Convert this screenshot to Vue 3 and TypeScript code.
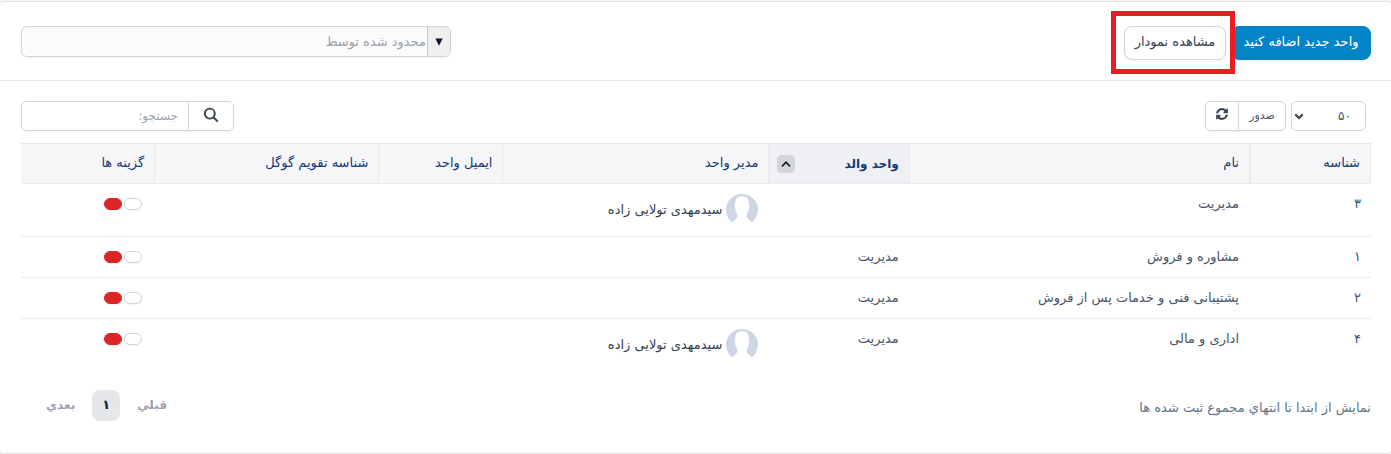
<script setup lang="ts">
import { ref } from 'vue'

interface Department {
  id: string
  name: string
  parent: string
  manager: string
}

const departments: Department[] = [
  { id: '۳', name: 'مدیریت', parent: '', manager: 'سیدمهدی تولایی زاده' },
  { id: '۱', name: 'مشاوره و فروش', parent: 'مدیریت', manager: '' },
  { id: '۲', name: 'پشتیبانی فنی و خدمات پس از فروش', parent: 'مدیریت', manager: '' },
  { id: '۴', name: 'اداری و مالی', parent: 'مدیریت', manager: 'سیدمهدی تولایی زاده' },
]

const pageSize = ref('50')
const limitedBy = ref('')
const search = ref('')
</script>

<template>
  <main class="panel" dir="rtl" lang="fa">
    <header class="panel-head">
      <div class="actions">
        <button type="button" class="btn primary">واحد جدید اضافه کنید</button>
        <div class="highlighted">
          <button type="button" class="btn outline">مشاهده نمودار</button>
          <span class="highlight"></span>
        </div>
      </div>
      <div class="limit">
        <span class="limit-arrow">
          <svg width="8" height="8" viewBox="0 0 8 8"><path d="M0.3 0.5H7.7L4 7.8Z" fill="#0f172a" /></svg>
        </span>
        <select v-model="limitedBy" class="limit-select" aria-label="محدود شده توسط">
          <option value="">محدود شده توسط</option>
        </select>
      </div>
    </header>

    <section class="panel-body">
      <div class="toolbar">
        <div class="tools">
          <div class="size">
            <select v-model="pageSize" class="size-select" aria-label="۵۰">
              <option value="50">۵۰</option>
            </select>
            <svg class="size-arrow" width="10" height="7" viewBox="0 0 10 7">
              <path d="M1.3 1.4L5 5L8.7 1.4" fill="none" stroke="#3f4650" stroke-width="2.2" />
            </svg>
          </div>
          <div class="group">
            <button type="button" class="export">صدور</button>
            <button type="button" class="refresh" aria-label="↻">
              <svg width="12" height="12" viewBox="0 0 512 512" fill="#374151" stroke="#374151" stroke-width="14">
                <path d="M370.7 133.3C339.5 104 298.9 88 255.8 88c-77.5.1-144.3 53.2-162.8 126.9-1.3 5.4-6.1 9.2-11.7 9.2H24.1c-7.5 0-13.2-6.8-11.8-14.2C33.9 94.9 134.8 8 256 8c66.4 0 126.8 26.1 171.300 68.7L463 41C478.1 25.9 504 36.6 504 57.9V192c0 13.3-10.7 24-24 24H345.9c-21.4 0-32.1-25.9-17-41zM32 296h134.1c21.4 0 32.1 25.9 17 41l-41.8 41.7c31.3 29.3 71.8 45.3 114.9 45.3 77.4-.1 144.3-53.1 162.8-126.8 1.3-5.4 6.1-9.2 11.7-9.2h57.3c7.5 0 13.2 6.8 11.8 14.2C478.1 417.1 377.2 504 256 504c-66.4 0-126.8-26.1-171.3-68.7L49 471c-15.1 15.1-41 4.4-41-16.900V320c0-13.3 10.7-24 24-24z" />
              </svg>
            </button>
          </div>
        </div>
        <div class="search">
          <button type="button" class="search-btn" aria-label="جستجو">
            <svg width="16" height="16" viewBox="0 0 16 16" fill="none" stroke="#374151">
              <circle cx="6.8" cy="6.6" r="5" stroke-width="1.9" />
              <path d="M10.4 10.3L14.8 14.6" stroke-width="2" />
            </svg>
          </button>
          <input v-model="search" type="search" class="search-input" placeholder="جستجو:" aria-label="جستجو:" />
        </div>
      </div>

      <table class="grid">
        <thead>
          <tr>
            <th class="c-id" scope="col">شناسه</th>
            <th class="c-name" scope="col">نام</th>
            <th class="c-parent sorted" scope="col" aria-sort="ascending">
              <div class="sort">
                <span>واحد والد</span>
                <span class="sort-mark">
                  <svg width="10" height="8" viewBox="0 0 10 8">
                    <path d="M1 6.3L5 2.2L9 6.3" fill="none" stroke="#111827" stroke-width="1.7" />
                  </svg>
                </span>
              </div>
            </th>
            <th class="c-manager" scope="col">مدیر واحد</th>
            <th class="c-email" scope="col">ایمیل واحد</th>
            <th class="c-google" scope="col">شناسه تقویم گوگل</th>
            <th class="c-options" scope="col">گزینه ها</th>
          </tr>
        </thead>
        <tbody>
          <tr v-for="d in departments" :key="d.id">
            <td>{{ d.id }}</td>
            <td>{{ d.name }}</td>
            <td>{{ d.parent }}</td>
            <td>
              <div v-if="d.manager" class="person">
                <svg class="avatar" width="32" height="32" viewBox="0 0 32 32">
                  <path d="M6.2 28.6A16 16 0 1 1 25.8 28.6C24.6 26 21.400 25.600 20.800 22.800C20.500 21.800 20.600 20.600 21.200 19.300C22.200 18 22.700 16.300 22.800 14.400C23.700 12.800 23.400 11 22.800 10C23 5 20.300 2.300 16 2.300C11.700 2.300 9 5 9.200 10C8.600 11 8.300 12.800 9.200 14.400C9.300 16.300 9.800 18 10.800 19.300C11.400 20.600 11.500 21.800 11.200 22.800C10.600 25.600 7.400 26 6.200 28.600Z" fill="#ced5e5" />
                </svg>
                <a href="#">{{ d.manager }}</a>
              </div>
            </td>
            <td></td>
            <td></td>
            <td>
              <div class="options">
                <button type="button" class="pill" aria-label="ویرایش"></button>
                <button type="button" class="pill danger" aria-label="حذف"></button>
              </div>
            </td>
          </tr>
        </tbody>
      </table>

      <footer class="foot">
        <p class="summary">نمایش از ابتدا تا انتهاي مجموع ثبت شده ها</p>
        <nav class="pages">
          <a href="#" class="page">قبلي</a>
          <a href="#" class="page current" aria-current="page">۱</a>
          <a href="#" class="page">بعدي</a>
        </nav>
      </footer>
    </section>
  </main>
</template>

<style>
body {
  margin: 0;
  background: #f4f4f5;
}
</style>

<style scoped>
* {
  box-sizing: border-box;
}

.panel {
  margin-top: 1px;
  background: #fff;
  border-top: 1px solid #e2e3e7;
  border-bottom: 1px solid #e2e3e7;
  border-radius: 4px;
  font: 13px/20px "DejaVu Sans", sans-serif;
  color: #475569;
}

button,
select,
input {
  margin: 0;
  font: inherit;
  color: inherit;
  appearance: none;
}

.panel-head {
  display: flex;
  justify-content: space-between;
  align-items: flex-start;
  padding: 24px 20px 20px;
  border-bottom: 1px solid #e5e7eb;
}

.actions {
  display: flex;
  gap: 5px;
}

.btn {
  height: 34px;
  padding: 0 9px 2px;
  border: 1px solid #d1d5db;
  border-radius: 8px;
  background: #fff;
  color: #334155;
  white-space: nowrap;
  box-shadow: 0 1px 2px rgba(0, 0, 0, 0.05);
}

.primary {
  min-width: 140px;
  background: #0284c7;
  border-color: #0284c7;
  color: #fff;
  font-weight: 500;
}

.outline {
  min-width: 102px;
}

.highlighted {
  position: relative;
}

.highlight {
  position: absolute;
  inset: -15px -9px -14px -13px;
  border: 5px solid #ed1c24;
  pointer-events: none;
}

.limit {
  display: flex;
  width: 430px;
  height: 31px;
  margin-left: 1px;
  border: 1px solid #d1d5db;
  border-radius: 6px;
  background: #fbfbfb;
  overflow: hidden;
  box-shadow: 0 1px 2px rgba(0, 0, 0, 0.05);
}

.limit-arrow {
  display: flex;
  flex: none;
  align-items: center;
  justify-content: center;
  width: 23px;
  background: #efefef;
  border-left: 1px solid #c8c8c8;
}

.limit-select {
  flex: 1;
  border: 0;
  padding: 0 1px;
  background: transparent;
  color: #9ca3af;
}

.panel-body {
  padding: 20px 20px 32px 21px;
}

.toolbar {
  display: flex;
  justify-content: space-between;
  padding-right: 5px;
  margin-bottom: 12px;
}

.tools {
  display: flex;
  gap: 5px;
}

.size {
  position: relative;
}

.size-select {
  width: 75px;
  height: 30px;
  padding: 0 14px;
  border: 1px solid #d1d5db;
  border-radius: 6px;
  background: #fff;
  font-size: 12px;
}

.size-arrow {
  position: absolute;
  left: 3px;
  top: 12px;
  pointer-events: none;
}

.group,
.search {
  display: flex;
  height: 30px;
  border: 1px solid #d1d5db;
  border-radius: 6px;
  background: #fff;
  overflow: hidden;
  box-shadow: 0 1px 2px rgba(0, 0, 0, 0.05);
}

.group button,
.search-btn {
  padding: 0;
  border: 0;
  border-left: 1px solid #d1d5db;
  background: #fff;
}

.group .export {
  width: 47px;
  font-size: 11px;
}

.group .refresh {
  width: 32px;
  border-left: 0;
}

.search {
  width: 213px;
}

.search-btn {
  display: flex;
  flex: none;
  align-items: center;
  justify-content: center;
  width: 45px;
  padding-bottom: 2px;
}

.search-input {
  flex: 1;
  min-width: 0;
  padding: 0 10px;
  border: 0;
  outline: 0;
  font-size: 12px;
}

.search-input::placeholder {
  color: #9ca3af;
  opacity: 1;
}

.grid {
  width: 100%;
  table-layout: fixed;
  border-collapse: separate;
  border-spacing: 0;
}

th {
  height: 41px;
  padding: 0 10px 2px;
  background: #f6f6f9;
  border: 0 solid #e9eaee;
  border-width: 1px 0 1px 1px;
  color: #12397a;
  font-weight: 400;
  text-align: right;
}

.c-id {
  width: 122px;
  border-width: 1px 1px 1px 2px;
}

.c-name {
  width: 25.2%;
}

.c-parent {
  width: 10.4%;
}

.c-manager {
  width: 19.7%;
}

.c-email {
  width: 9.2%;
}

.c-google {
  width: 16.6%;
}

.c-options {
  border-left: 0;
}

.sorted {
  background: #eff0f3;
  padding: 0 10px 0 8px;
  font-size: 12px;
  font-weight: 700;
}

.sort {
  display: flex;
  justify-content: space-between;
  align-items: center;
}

.sort-mark {
  display: flex;
  align-items: center;
  justify-content: center;
  width: 18px;
  height: 18px;
  border-radius: 5px;
  background: #d3d5db;
}

td {
  padding: 10px;
  border-bottom: 1px solid #ebecef;
  vertical-align: top;
}

tbody tr:last-child td {
  border-bottom: 0;
}

.person {
  display: flex;
  align-items: center;
  gap: 4px;
}

.person a {
  color: #334155;
  text-decoration: none;
  white-space: nowrap;
}

.avatar {
  flex: none;
}

.options {
  display: flex;
  gap: 2px;
  padding: 4px 2px 0;
}

.pill {
  width: 18px;
  height: 12px;
  padding: 0;
  border: 1px solid #d1d5db;
  border-radius: 6px;
  background: #fff;
  box-shadow: 0 1px 1px rgba(0, 0, 0, 0.05);
}

.danger {
  background: #dc2626;
  border-color: #dc2626;
}

.foot {
  display: flex;
  justify-content: space-between;
  align-items: flex-start;
  margin-top: 19px;
}

.summary {
  margin: 0;
  padding-top: 8px;
  color: #64748b;
}

.pages {
  display: flex;
  gap: 8px;
  margin-left: 16px;
}

.page {
  min-width: 28px;
  padding: 5px 9px 6px;
  border-radius: 8px;
  color: #9ca3af;
  font-size: 12px;
  font-weight: 700;
  text-align: center;
  text-decoration: none;
}

.current {
  background: #e5e7eb;
  color: #111827;
  font-size: 13px;
}
</style>
